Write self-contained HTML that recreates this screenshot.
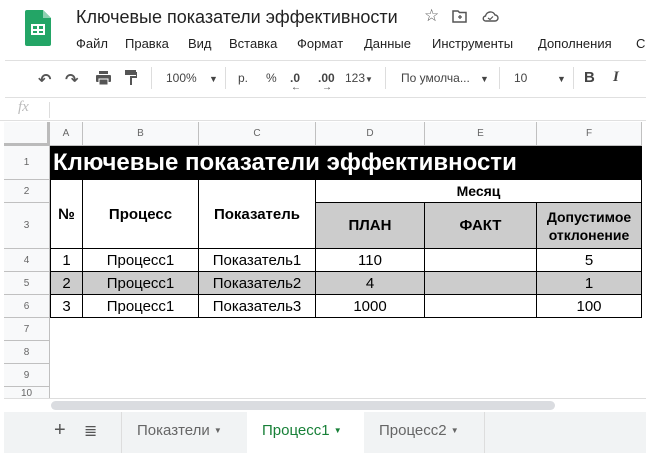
<!DOCTYPE html>
<html><head><meta charset="utf-8"><style>
*{margin:0;padding:0;box-sizing:border-box}
body{width:646px;height:453px;overflow:hidden;background:#fff;font-family:"Liberation Sans","DejaVu Sans",sans-serif;position:relative;color:#222}
.a{position:absolute;white-space:nowrap}
.m{position:absolute;top:36px;font-size:13px;color:#222;white-space:nowrap}
.tb{font-size:12px;color:#444;top:71px}
.cell{position:absolute;border-right:1px solid #000;border-bottom:1px solid #000;display:flex;align-items:center;justify-content:center;text-align:center;font-size:15px;color:#000}
.b{font-weight:bold}
.hd{position:absolute;background:#f8f9fa;color:#666;font-size:10px;display:flex;align-items:center;justify-content:center;border-right:1px solid #c0c0c0;border-bottom:1px solid #c0c0c0}
.g{background:#ccc}
</style></head><body>
<svg class="a" style="left:25px;top:10px" width="26" height="36" viewBox="0 0 26 36"><path d="M2 0h16l8 8v26a2 2 0 0 1-2 2H2a2 2 0 0 1-2-2V2a2 2 0 0 1 2-2z" fill="#23a566"/><path d="M18 0v8h8z" fill="#8ed1b1"/><rect x="6" y="14" width="14" height="11" fill="#fff"/><rect x="8" y="16" width="4" height="3" fill="#23a566"/><rect x="14" y="16" width="4" height="3" fill="#23a566"/><rect x="8" y="21" width="4" height="2" fill="#23a566"/><rect x="14" y="21" width="4" height="2" fill="#23a566"/></svg>
<div class="a" style="left:76px;top:7px;font-size:18px;color:#222">Ключевые показатели эффективности</div>
<div class="a" style="left:424px;top:6px;font-size:17px;color:#555">☆</div>
<svg class="a" style="left:452px;top:10px" width="15" height="13" viewBox="0 0 15 13"><path d="M1 1h5l1.5 1.5H14v9.5H1z" fill="none" stroke="#555" stroke-width="1.5"/><path d="M6 7h4M8 5v4" stroke="#555" stroke-width="1.3"/></svg>
<svg class="a" style="left:482px;top:10px" width="17" height="13" viewBox="0 0 17 13"><path d="M4 11h9a3 3 0 0 0 0-6 5 5 0 0 0-9.5 1A2.5 2.5 0 0 0 4 11z" fill="none" stroke="#555" stroke-width="1.4"/><path d="M6 8l2 1.5 3-3" fill="none" stroke="#555" stroke-width="1.2"/></svg>
<div class="m" style="left:76px">Файл</div>
<div class="m" style="left:125px">Правка</div>
<div class="m" style="left:188px">Вид</div>
<div class="m" style="left:229px">Вставка</div>
<div class="m" style="left:297px">Формат</div>
<div class="m" style="left:364px">Данные</div>
<div class="m" style="left:432px">Инструменты</div>
<div class="m" style="left:538px">Дополнения</div>
<div class="m" style="left:636px">С</div>
<div class="a" style="left:5px;top:60px;width:641px;height:1px;background:#e0e0e0"></div>
<div class="a" style="left:38px;top:70px;font-size:16px;color:#555;font-weight:bold">↶</div>
<div class="a" style="left:65px;top:70px;font-size:16px;color:#555;font-weight:bold">↷</div>
<svg class="a" style="left:96px;top:71px" width="15" height="14" viewBox="0 0 15 14"><rect x="3" y="0" width="9" height="3" fill="#555"/><rect x="0" y="4" width="15" height="7" rx="1" fill="#555"/><rect x="3" y="8" width="9" height="6" fill="#555" stroke="#fff" stroke-width="1"/></svg>
<svg class="a" style="left:125px;top:70px" width="12" height="15" viewBox="0 0 12 15"><rect x="0" y="0" width="11" height="5" fill="#555"/><path d="M11 3h1v4H6v8" fill="none" stroke="#555" stroke-width="2"/></svg>
<div class="a" style="left:151px;top:67px;width:1px;height:22px;background:#ddd"></div>
<div class="a tb" style="left:166px">100%</div><div class="a tb" style="left:209px;font-size:9px;top:74px">▼</div>
<div class="a" style="left:225px;top:67px;width:1px;height:22px;background:#ddd"></div>
<div class="a tb" style="left:238px">р.</div><div class="a tb" style="left:266px">%</div>
<div class="a tb" style="left:290px;font-weight:bold">.0</div><div class="a" style="left:291px;top:82px;font-size:10px;color:#444">←</div>
<div class="a tb" style="left:318px;font-weight:bold">.00</div><div class="a" style="left:322px;top:82px;font-size:10px;color:#444">→</div>
<div class="a tb" style="left:345px">123<span style="font-size:8px">▼</span></div>
<div class="a" style="left:385px;top:67px;width:1px;height:22px;background:#ddd"></div>
<div class="a tb" style="left:401px">По умолча...</div><div class="a tb" style="left:480px;font-size:9px;top:74px">▼</div>
<div class="a" style="left:499px;top:67px;width:1px;height:22px;background:#ddd"></div>
<div class="a tb" style="left:514px">10</div><div class="a tb" style="left:557px;font-size:9px;top:74px">▼</div>
<div class="a" style="left:573px;top:67px;width:1px;height:22px;background:#ddd"></div>
<div class="a" style="left:584px;top:69px;font-size:15px;font-weight:bold;color:#444">B</div>
<div class="a" style="left:613px;top:69px;font-size:15px;font-weight:bold;font-style:italic;color:#444;font-family:'Liberation Serif',serif">I</div>
<div class="a" style="left:5px;top:97px;width:641px;height:1px;background:#e0e0e0"></div>
<div class="a" style="left:18px;top:99px;font-size:15px;color:#bbb;font-style:italic;font-family:'Liberation Serif',serif">fx</div>
<div class="a" style="left:49px;top:102px;width:1px;height:16px;background:#ddd"></div>
<div class="a" style="left:0;top:120px;width:646px;height:1px;background:#e0e0e0"></div>
<div class="hd" style="left:4px;top:122px;width:46px;height:24px;border-bottom:3px solid #bbb;border-right:3px solid #bbb"></div>
<div class="hd" style="left:50px;top:122px;width:33px;height:24px">A</div>
<div class="hd" style="left:83px;top:122px;width:116px;height:24px">B</div>
<div class="hd" style="left:199px;top:122px;width:117px;height:24px">C</div>
<div class="hd" style="left:316px;top:122px;width:109px;height:24px">D</div>
<div class="hd" style="left:425px;top:122px;width:112px;height:24px">E</div>
<div class="hd" style="left:537px;top:122px;width:105px;height:24px">F</div>
<div class="hd" style="left:4px;top:146px;width:46px;height:34px">1</div>
<div class="hd" style="left:4px;top:180px;width:46px;height:23px">2</div>
<div class="hd" style="left:4px;top:203px;width:46px;height:46px">3</div>
<div class="hd" style="left:4px;top:249px;width:46px;height:23px">4</div>
<div class="hd" style="left:4px;top:272px;width:46px;height:23px">5</div>
<div class="hd" style="left:4px;top:295px;width:46px;height:23px">6</div>
<div class="hd" style="left:4px;top:318px;width:46px;height:23px">7</div>
<div class="hd" style="left:4px;top:341px;width:46px;height:23px">8</div>
<div class="hd" style="left:4px;top:364px;width:46px;height:23px">9</div>
<div class="hd" style="left:4px;top:387px;width:46px;height:12px;border-bottom:none">10</div>
<div class="cell b" style="left:50px;top:146px;width:592px;height:34px;background:#000;color:#fff;font-size:24px;justify-content:flex-start;padding-left:3px">Ключевые показатели эффективности</div>
<div class="cell b" style="left:50px;top:180px;width:33px;height:69px;border-left:1px solid #000">№</div>
<div class="cell b" style="left:83px;top:180px;width:116px;height:69px">Процесс</div>
<div class="cell b" style="left:199px;top:180px;width:117px;height:69px">Показатель</div>
<div class="cell b" style="left:316px;top:180px;width:326px;height:23px;font-size:14px">Месяц</div>
<div class="cell b g" style="left:316px;top:203px;width:109px;height:46px">ПЛАН</div>
<div class="cell b g" style="left:425px;top:203px;width:112px;height:46px">ФАКТ</div>
<div class="cell b g" style="left:537px;top:203px;width:105px;height:46px;font-size:14px;line-height:18px">Допустимое<br>отклонение</div>
<div class="cell" style="left:50px;top:249px;width:33px;height:23px;border-left:1px solid #000">1</div>
<div class="cell" style="left:83px;top:249px;width:116px;height:23px">Процесс1</div>
<div class="cell" style="left:199px;top:249px;width:117px;height:23px">Показатель1</div>
<div class="cell" style="left:316px;top:249px;width:109px;height:23px">110</div>
<div class="cell" style="left:425px;top:249px;width:112px;height:23px"></div>
<div class="cell" style="left:537px;top:249px;width:105px;height:23px">5</div>
<div class="cell g" style="left:50px;top:272px;width:33px;height:23px;border-left:1px solid #000">2</div>
<div class="cell g" style="left:83px;top:272px;width:116px;height:23px">Процесс1</div>
<div class="cell g" style="left:199px;top:272px;width:117px;height:23px">Показатель2</div>
<div class="cell g" style="left:316px;top:272px;width:109px;height:23px">4</div>
<div class="cell g" style="left:425px;top:272px;width:112px;height:23px"></div>
<div class="cell g" style="left:537px;top:272px;width:105px;height:23px">1</div>
<div class="cell" style="left:50px;top:295px;width:33px;height:23px;border-left:1px solid #000">3</div>
<div class="cell" style="left:83px;top:295px;width:116px;height:23px">Процесс1</div>
<div class="cell" style="left:199px;top:295px;width:117px;height:23px">Показатель3</div>
<div class="cell" style="left:316px;top:295px;width:109px;height:23px">1000</div>
<div class="cell" style="left:425px;top:295px;width:112px;height:23px"></div>
<div class="cell" style="left:537px;top:295px;width:105px;height:23px">100</div>
<div class="a" style="left:4px;top:398px;width:642px;height:1px;background:#ddd"></div>
<div class="a" style="left:51px;top:401px;width:504px;height:9px;border-radius:5px;background:#dadce0"></div>
<div class="a" style="left:4px;top:412px;width:642px;height:41px;background:#f1f3f4"></div>
<div class="a" style="left:54px;top:419px;font-size:20px;color:#555">+</div>
<div class="a" style="left:84px;top:421px;font-size:16px;color:#555">≣</div>
<div class="a" style="left:121px;top:412px;width:1px;height:41px;background:#ddd"></div>
<div class="a" style="left:137px;top:422px;font-size:15px;color:#666">Показтели <span style="font-size:8px;vertical-align:2px">▼</span></div>
<div class="a" style="left:247px;top:412px;width:117px;height:41px;background:#fff"></div>
<div class="a" style="left:262px;top:422px;font-size:15px;color:#188038">Процесс1 <span style="font-size:8px;vertical-align:2px">▼</span></div>
<div class="a" style="left:379px;top:422px;font-size:15px;color:#666">Процесс2 <span style="font-size:8px;vertical-align:2px">▼</span></div>
<div class="a" style="left:484px;top:412px;width:1px;height:41px;background:#ddd"></div>
</body></html>
